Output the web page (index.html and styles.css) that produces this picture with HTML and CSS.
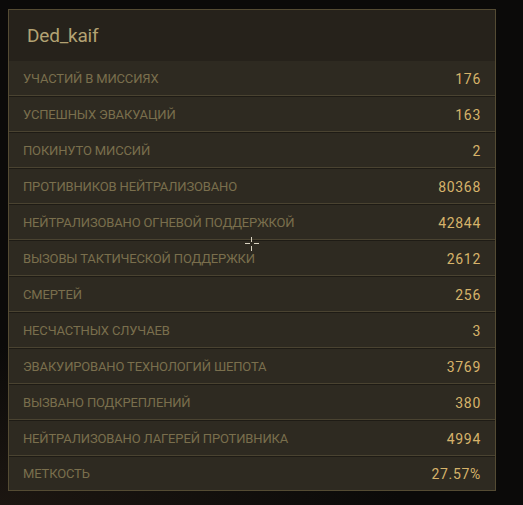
FILE: index.html
```html
<!DOCTYPE html>
<html lang="ru">
<head>
<meta charset="utf-8">
<link rel="stylesheet" href="styles.css">
</head>
<body>
<div class="panel">
  <div class="header">Ded_kaif</div>
  <div class="rows">
    <div class="row"><span class="label">УЧАСТИЙ В МИССИЯХ</span><span class="value">176</span></div>
    <div class="row"><span class="label">УСПЕШНЫХ ЭВАКУАЦИЙ</span><span class="value">163</span></div>
    <div class="row"><span class="label">ПОКИНУТО МИССИЙ</span><span class="value">2</span></div>
    <div class="row"><span class="label">ПРОТИВНИКОВ НЕЙТРАЛИЗОВАНО</span><span class="value">80368</span></div>
    <div class="row"><span class="label">НЕЙТРАЛИЗОВАНО ОГНЕВОЙ ПОДДЕРЖКОЙ</span><span class="value">42844</span></div>
    <div class="row"><span class="label">ВЫЗОВЫ ТАКТИЧЕСКОЙ ПОДДЕРЖКИ</span><span class="value">2612</span></div>
    <div class="row"><span class="label">СМЕРТЕЙ</span><span class="value">256</span></div>
    <div class="row"><span class="label">НЕСЧАСТНЫХ СЛУЧАЕВ</span><span class="value">3</span></div>
    <div class="row"><span class="label">ЭВАКУИРОВАНО ТЕХНОЛОГИЙ ШЕПОТА</span><span class="value">3769</span></div>
    <div class="row"><span class="label">ВЫЗВАНО ПОДКРЕПЛЕНИЙ</span><span class="value">380</span></div>
    <div class="row"><span class="label">НЕЙТРАЛИЗОВАНО ЛАГЕРЕЙ ПРОТИВНИКА</span><span class="value">4994</span></div>
    <div class="row"><span class="label">МЕТКОСТЬ</span><span class="value">27.57%</span></div>
  </div>
</div>
<div class="cursor"></div>
</body>
</html>
```
FILE: styles.css
```css
html, body {
  margin: 0;
  padding: 0;
}
body {
  width: 523px;
  height: 505px;
  overflow: hidden;
  background: radial-gradient(ellipse 400px 160px at 0% 100%, #1c1611 0%, #0b0a09 100%), #0a0a0a;
  font-family: Roboto, "Liberation Sans", sans-serif;
  padding: 9px 0 0 8px;
  box-sizing: border-box;
  position: relative;
}
.panel {
  width: 488px;
  height: 482px;
  box-sizing: border-box;
  border: 1px solid #544b33;
  background: #2e2a21;
  display: flex;
  flex-direction: column;
}
.header {
  height: 51px;
  flex: none;
  background: #26221b;
  color: #b3a273;
  font-size: 19px;
  letter-spacing: -0.2px;
  padding: 14px 0 0 18px;
  box-sizing: border-box;
}
.rows {
  display: flex;
  flex-direction: column;
  flex: 1;
}
.row {
  height: 36px;
  flex: none;
  box-sizing: border-box;
  display: flex;
  justify-content: space-between;
  align-items: center;
  padding: 0 14px 0 14px;
  border-bottom: 1px solid #1e1b15;
  box-shadow: inset 0 -1px 0 #4a4331;
}
.row:last-child {
  flex: 1;
  height: auto;
  border-bottom: none;
  box-shadow: none;
}
.label {
  color: #7a6f4d;
  font-size: 13px;
  letter-spacing: -0.15px;
}
.value {
  color: #d6b36a;
  font-size: 14px;
  letter-spacing: 0.7px;
}
.cursor {
  position: absolute;
  left: 245px;
  top: 237px;
  width: 14px;
  height: 14px;
}
.cursor::before, .cursor::after {
  content: "";
  position: absolute;
}
.cursor::before {
  left: 6px;
  top: 0;
  width: 1px;
  height: 14px;
  background: linear-gradient(#d9d2c0 0 5px, transparent 5px 9px, #d9d2c0 9px);
}
.cursor::after {
  top: 6px;
  left: 0;
  height: 1px;
  width: 14px;
  background: linear-gradient(90deg, #d9d2c0 0 5px, transparent 5px 9px, #d9d2c0 9px);
}
```
